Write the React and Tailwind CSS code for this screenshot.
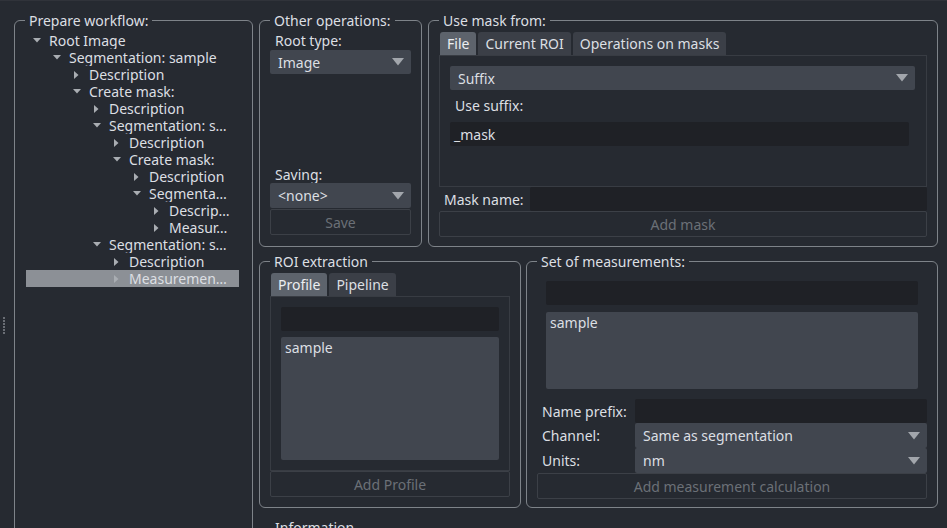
import React from "react";

const Arrow = () => (
  <svg width="12" height="8" viewBox="0 0 12 8" className="shrink-0">
    <path d="M0 0H12L6 7.5Z" fill="#a2a6ac" />
  </svg>
);

const TreeArrow = ({ open }) =>
  open ? (
    <svg width="8" height="5" viewBox="0 0 8 5">
      <path d="M0 0H8L4 4.5Z" fill="#a9adb2" />
    </svg>
  ) : (
    <svg width="5" height="8" viewBox="0 0 5 8">
      <path d="M0 0V8L4.5 4Z" fill="#a9adb2" />
    </svg>
  );

const Combo = ({ text, className = "" }) => (
  <div
    className={`h-[24px] bg-[#41464f] rounded-[2px] flex items-center justify-between pl-[8px] pr-[7px] ${className}`}
  >
    <span className="whitespace-nowrap">{text}</span>
    <Arrow />
  </div>
);

const Btn = ({ text, className = "" }) => (
  <div
    className={`h-[26px] border border-[#3c4047] rounded-[2px] flex items-center justify-center text-[#6b7077] ${className}`}
  >
    {text}
  </div>
);

const Input = ({ text, className = "" }) => (
  <div
    className={`h-[24px] bg-[#1f2126] rounded-[2px] flex items-center pl-[4px] ${className}`}
  >
    {text}
  </div>
);

const Group = ({ title, className = "", children }) => (
  <fieldset
    className={`border border-[#7e8389] rounded-[6px] px-[10px] min-w-0 shrink-0 ${className}`}
  >
    <legend className="px-[4px] leading-[17px]">{title}</legend>
    {children}
  </fieldset>
);

const Tab = ({ text, active }) => (
  <div
    className={`h-[23px] px-[7px] flex items-center rounded-t-[3px] ${
      active ? "bg-[#5d636c] text-[#eceef1]" : "bg-[#3b3f47]"
    }`}
  >
    {text}
  </div>
);

const tree = [
  [0, 1, "Root Image"],
  [1, 1, "Segmentation: sample"],
  [2, 0, "Description"],
  [2, 1, "Create mask:"],
  [3, 0, "Description"],
  [3, 1, "Segmentation: s…"],
  [4, 0, "Description"],
  [4, 1, "Create mask:"],
  [5, 0, "Description"],
  [5, 1, "Segmenta…"],
  [6, 0, "Descrip…"],
  [6, 0, "Measur…"],
  [3, 1, "Segmentation: s…"],
  [4, 0, "Description"],
  [4, 0, "Measuremen…", true],
];

export default function App() {
  return (
    <div className="w-[947px] h-[528px] overflow-hidden bg-[#262a31] border-t border-[#30333a] flex text-[14px] leading-[17px] text-[#dcdfe3] font-['Noto_Sans',sans-serif]">
      {/* splitter handle */}
      <div className="w-[14px] shrink-0 flex flex-col pl-[3px] pt-[316px] gap-[1px]">
        {[0, 1, 2, 3, 4, 5].map((i) => (
          <div key={i} className="w-[2px] h-[2px] bg-[#6a6e75]" />
        ))}
      </div>

      {/* Prepare workflow */}
      <Group title="Prepare workflow:" className="w-[239px] h-[600px] mt-[11px]">
        <div className="pt-[3px] pr-[3px] ml-[1px]">
          {tree.map(([lvl, open, text, sel], i) => (
            <div
              key={i}
              className={`h-[17px] flex items-center ${sel ? "bg-[#8c9096]" : ""}`}
            >
              <div style={{ width: lvl * 20 }} className="shrink-0" />
              <div className="w-[20px] shrink-0 flex justify-center pl-[1px]">
                <TreeArrow open={open} />
              </div>
              <span className="ml-[3px] whitespace-nowrap overflow-hidden">{text}</span>
            </div>
          ))}
        </div>
      </Group>

      {/* right column */}
      <div className="ml-[6px] pt-[11px] flex flex-col">
        <div className="flex gap-[6px]">
          <Group title="Other operations:" className="w-[163px] h-[235px]">
            <div className="h-[206px] flex flex-col pt-[3px]">
              <div className="pl-[5px]">Root type:</div>
              <Combo text="Image" className="mt-[1px]" />
              <div className="flex-1" />
              <div className="pl-[5px]">Saving:</div>
              <Combo text="<none>" className="mt-[0px] h-[25px]" />
              <Btn text="Save" className="mt-[1px]" />
            </div>
          </Group>

          <Group title="Use mask from:" className="w-[510px] h-[235px]">
            <div className="pt-[3px] flex flex-col">
              <div className="flex gap-[2px] ml-[1px]">
                <Tab text="File" active />
                <Tab text="Current ROI" />
                <Tab text="Operations on masks" />
              </div>
              <div className="h-[132px] border border-[#383c43] pt-[10px] pl-[10px] pr-[11px]">
                <Combo text="Suffix" />
                <div className="pl-[5px] mt-[7px]">Use suffix:</div>
                <Input text="_mask" className="mt-[8px] mr-[6px]" />
              </div>
              <div className="h-[24px] flex items-center">
                <div className="w-[91px] pl-[5px] shrink-0">Mask name:</div>
                <Input className="flex-1 h-[24px]" />
              </div>
              <Btn text="Add mask" className="h-[25px]" />
            </div>
          </Group>
        </div>

        <div className="flex gap-[6px] mt-[6px]">
          <Group title="ROI extraction" className="w-[262px] h-[255px]">
            <div className="pt-[3px] flex flex-col">
              <div className="flex gap-[2px] ml-[1px]">
                <Tab text="Profile" active />
                <Tab text="Pipeline" />
              </div>
              <div className="h-[175px] border border-[#383c43] pt-[10px] px-[10px]">
                <Input />
                <div className="h-[123px] mt-[6px] bg-[#41464f] rounded-[2px] pl-[4px] pt-[2px]">
                  sample
                </div>
              </div>
              <Btn text="Add Profile" />
            </div>
          </Group>

          <Group title="Set of measurements:" className="w-[412px] h-[255px] -ml-[1px]">
            <div className="pt-[11px] flex flex-col">
              <Input className="mx-[9px]" />
              <div className="h-[77px] mx-[9px] mt-[7px] bg-[#41464f] rounded-[2px] pl-[4px] pt-[2px]">
                sample
              </div>
              <div className="h-[24px] mt-[10px] flex items-center">
                <div className="w-[98px] pl-[5px] shrink-0">Name prefix:</div>
                <Input className="flex-1" />
              </div>
              <div className="h-[25px] flex items-center">
                <div className="w-[98px] pl-[5px] shrink-0">Channel:</div>
                <Combo text="Same as segmentation" className="flex-1 h-[25px]" />
              </div>
              <div className="h-[25px] flex items-center">
                <div className="w-[98px] pl-[5px] shrink-0">Units:</div>
                <Combo text="nm" className="flex-1 h-[25px]" />
              </div>
              <Btn text="Add measurement calculation" />
            </div>
          </Group>
        </div>

        <div className="pl-[16px] mt-[11px]">Information</div>
      </div>
    </div>
  );
}
